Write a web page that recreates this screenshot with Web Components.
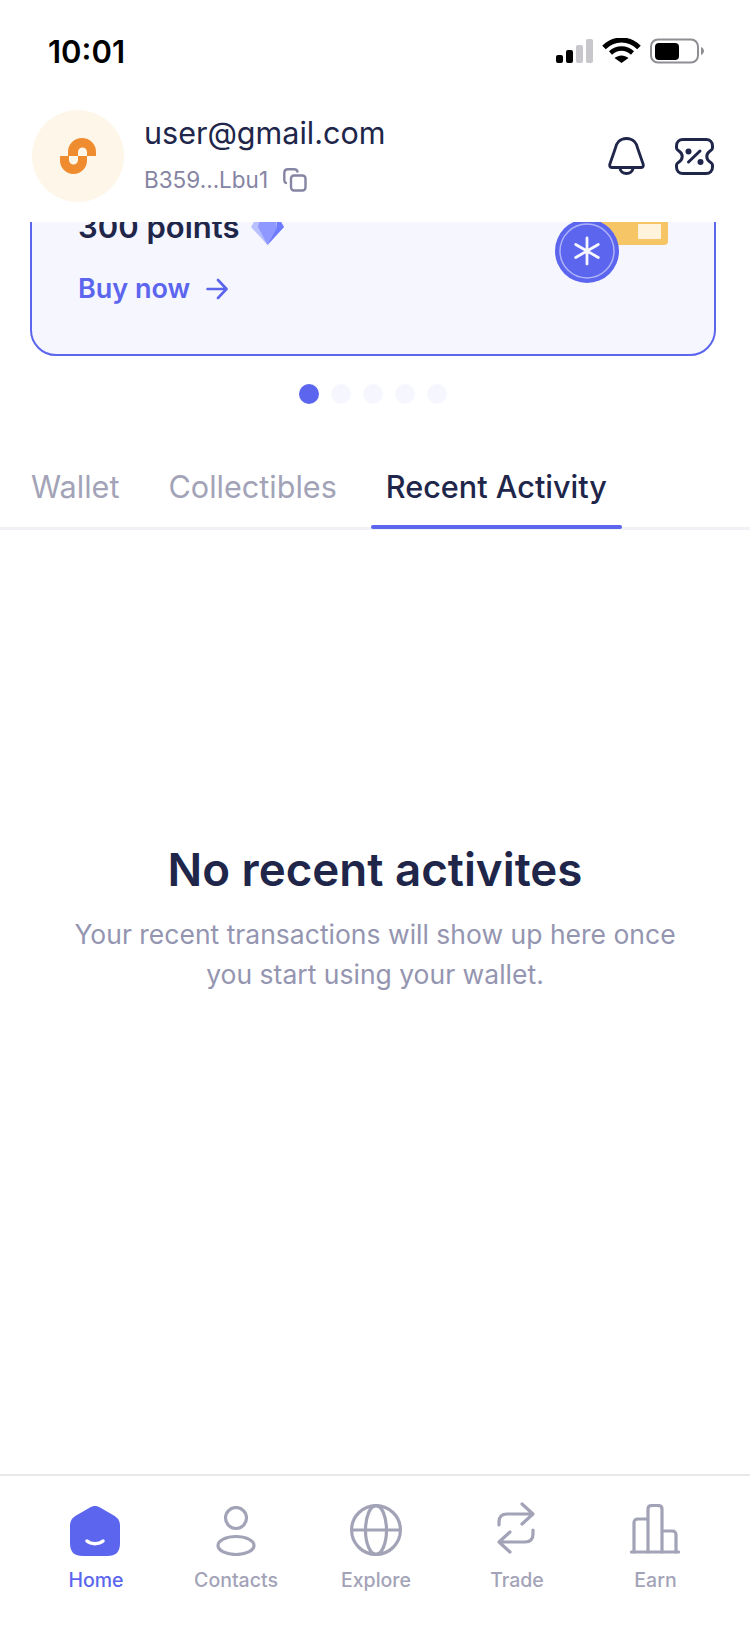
<!DOCTYPE html>
<html lang="en">
<head>
<meta charset="utf-8">
<title>Wallet</title>
<style>
  html, body { margin: 0; padding: 0; background: #fff; }
  body { font-family: Inter, "Liberation Sans", sans-serif; }
</style>
</head>
<body>
<app-shell>
  <status-bar></status-bar>
  <wallet-header></wallet-header>
  <promo-carousel></promo-carousel>
  <tab-strip></tab-strip>
  <empty-state></empty-state>
  <bottom-nav></bottom-nav>
</app-shell>
<script>
class AppShell extends HTMLElement {
  constructor() { super(); this.attachShadow({ mode: 'open' }); }
  connectedCallback() {
    this.shadowRoot.innerHTML = `
    <style>
      :host { display: flex; flex-direction: column; width: 750px; height: 1628px; overflow: hidden; background: #fff; }
    </style>
    <slot></slot>`;
  }
}

class StatusBar extends HTMLElement {
  constructor() { super(); this.attachShadow({ mode: 'open' }); }
  connectedCallback() {
    this.shadowRoot.innerHTML = `
    <style>
      :host { display: flex; justify-content: space-between; align-items: flex-start; height: 90px; flex: none; padding: 34px 46px 0 48px; box-sizing: border-box; }
      .time { font: 600 31px/36px Inter, sans-serif; color: #000; }
      svg { display: block; margin-top: 4px; }
    </style>
    <span class="time">10:01</span>
    <svg width="148" height="26" viewBox="0 0 148 26">
      <rect x="0" y="17" width="7" height="8" rx="2" fill="#000"/>
      <rect x="10" y="12" width="7" height="13" rx="2" fill="#000"/>
      <rect x="20" y="7" width="7" height="18" rx="2" fill="#c7c7cc"/>
      <rect x="30" y="1" width="7" height="24" rx="2" fill="#c7c7cc"/>
      <path d="M48 8.5 C58 -1.5 73 -1.5 83 8.5" transform="translate(0 1)" fill="none" stroke="#000" stroke-width="5"/>
      <path d="M54.5 15 C61 9 70 9 76.5 15" fill="none" stroke="#000" stroke-width="4.5"/>
      <path d="M58.5 20 C63 16.500 68 16.500 72.500 20 L65.500 25 Z" fill="#000"/>
      <rect x="95" y="1.500" width="47" height="23" rx="7" fill="none" stroke="#8e8e93" stroke-width="2"/>
      <rect x="99" y="5" width="24" height="17" rx="4" fill="#000"/>
      <path d="M145 9 C147 10 148 11.500 148 13 C148 14.500 147 16 145 17 Z" fill="#8e8e93"/>
    </svg>`;
  }
}

class WalletHeader extends HTMLElement {
  constructor() { super(); this.attachShadow({ mode: 'open' }); }
  connectedCallback() {
    this.shadowRoot.innerHTML = `
    <style>
      :host { display: flex; align-items: center; height: 132px; flex: none; padding: 0 36px 0 32px; box-sizing: border-box; background: #fff; }
      .avatar { width: 92px; height: 92px; border-radius: 50%; background: #fdf6e9; display: flex; align-items: center; justify-content: center; flex: none; }
      .who { margin-left: 20px; flex: 1; display: flex; flex-direction: column; gap: 12px; margin-top: -5px; }
      .mail { font: 400 30.5px/40px Inter, sans-serif; color: #20264a; }
      .addr { display: flex; align-items: center; gap: 15px; font: 400 22.5px/30px Inter, sans-serif; color: #8584a3; }
      .icons { display: flex; align-items: center; gap: 30px; }
      svg { display: block; }
    </style>
    <div class="avatar">
      <svg width="36" height="36" viewBox="0 0 36 36">
        <path d="M8 18 V14 A14 14 0 0 1 36 14 V18 H27 V14 A4.500 4.500 0 0 0 18 14 V18 Z" fill="#f08c30"/>
        <path d="M0 18 H9 V22 A4.500 4.500 0 0 0 18 22 V18 H27 V22.500 A13.500 13.500 0 0 1 0 22.500 Z" fill="#f08c30"/>
      </svg>
    </div>
    <div class="who">
      <div class="mail">user@gmail.com</div>
      <div class="addr">B359...Lbu1
        <svg width="24" height="24" viewBox="0 0 24 24" fill="none" stroke="#8584a3" stroke-width="2.400" stroke-linecap="round">
          <rect x="8" y="7.500" width="14.500" height="15" rx="3"/>
          <path d="M3 15 C1.800 14.500 1.300 13.500 1.300 12 V5 C1.300 2.800 2.800 1.300 5 1.300 H11 C13 1.300 14 2 14.500 3.500"/>
        </svg>
      </div>
    </div>
    <div class="icons">
      <svg width="37" height="38" viewBox="0 0 39 38" preserveAspectRatio="none" fill="none" stroke="#20264a" stroke-width="3" stroke-linejoin="round" stroke-linecap="round">
        <path d="M19.500 1.500 C12.500 1.500 8.500 6.500 7.500 12 L2 27 C1.300 29.500 2.500 30.500 4.500 30.500 H34.500 C36.500 30.500 37.700 29.500 37 27 L31.500 12 C30.500 6.500 26.500 1.500 19.500 1.500 Z"/>
        <path d="M12.500 31 C13 34.500 16 36.500 19.500 36.500 C23 36.500 26 34.500 26.500 31"/>
      </svg>
      <svg width="39" height="37" viewBox="0 0 39 37" fill="none" stroke="#20264a" stroke-width="3" stroke-linecap="round">
        <path d="M8 1.500 H31 C35 1.500 37.500 4 37.500 8 V10 C37.500 11.500 36.500 12 35 13 C32.800 14.500 31.800 16.500 31.800 18.500 C31.800 20.500 32.800 22.500 35 24 C36.500 25 37.500 25.500 37.500 27 V29 C37.500 33 35 35.500 31 35.500 H8 C4 35.500 1.500 33 1.500 29 V27 C1.500 25.500 2.500 25 4 24 C6.200 22.500 7.200 20.500 7.200 18.500 C7.200 16.500 6.200 14.500 4 13 C2.500 12 1.500 11.500 1.500 10 V8 C1.500 4 4 1.500 8 1.500 Z"/>
        <path d="M25 13 L13.500 24"/>
        <circle cx="13.500" cy="13.500" r="3" fill="#20264a" stroke="none"/>
        <circle cx="25.500" cy="24" r="3" fill="#20264a" stroke="none"/>
      </svg>
    </div>`;
  }
}

class PromoCarousel extends HTMLElement {
  constructor() { super(); this.attachShadow({ mode: 'open' }); }
  connectedCallback() {
    this.shadowRoot.innerHTML = `
    <style>
      :host { display: block; flex: none; }
      .clip { height: 134px; overflow: hidden; display: flex; flex-direction: column; justify-content: flex-end; padding: 0 34px 0 30px; }
      .card { position: relative; flex: none; box-sizing: border-box; height: 200px; padding: 49px 0 0 46px; background: #f6f6fe; border: 2px solid #5b65ee; border-radius: 26px; }
      .title { display: flex; align-items: center; gap: 12px; font: 600 31px/40px Inter, sans-serif; color: #20264a; }
      .title svg { margin-top: 6px; }
      .buy { display: flex; align-items: center; gap: 16px; margin-top: 24px; font: 600 27px/36px Inter, sans-serif; color: #5b65ee; }
      .art { position: absolute; right: 46px; top: 57px; }
      .dots { display: flex; gap: 12px; justify-content: center; margin: 28px 4px 0 0; }
      .dots i { width: 20px; height: 20px; border-radius: 50%; background: #f6f6fe; }
      .dots i.on { background: #5b65ee; }
      svg { display: block; }
    </style>
    <div class="clip">
      <div class="card">
        <div class="title">300 points
          <svg width="33" height="30" viewBox="0 0 33 30">
            <path d="M7 0 H26 L33 12 L16.500 30 L0 12 Z" fill="#b9c0ff"/>
            <path d="M10 0 H23 L26 12 L16.500 30 L7 12 Z" fill="#8e98ff"/>
            <path d="M26 0 L33 12 L16.500 30 L26 12 Z" fill="#6f7bff"/>
          </svg>
        </div>
        <div class="buy">Buy now
          <svg width="22" height="22" viewBox="0 0 22 22" fill="none" stroke="#5b65ee" stroke-width="2.600" stroke-linecap="round" stroke-linejoin="round">
            <path d="M1.500 11 H20 M12 2 L20.500 11 L12 20"/>
          </svg>
        </div>
        <svg class="art" width="113" height="68" viewBox="0 0 113 68">
          <path d="M20 0 H113 V26 Q113 30 109 30 H20 Z" fill="#f5c566"/>
          <rect x="83" y="9" width="23" height="15" rx="1" fill="#fff3dc"/>
          <circle cx="32" cy="36" r="32" fill="#5b65ee"/>
          <circle cx="32" cy="36" r="27" fill="none" stroke="#aeb2f8" stroke-width="1.500"/>
          <path d="M32 23 V49 M20.700 29.500 L43.300 42.500 M43.300 29.500 L20.700 42.500" stroke="#f6f6fe" stroke-width="2.800" stroke-linecap="round"/>
        </svg>
      </div>
    </div>
    <div class="dots"><i class="on"></i><i></i><i></i><i></i><i></i></div>`;
  }
}

class TabStrip extends HTMLElement {
  constructor() { super(); this.attachShadow({ mode: 'open' }); }
  connectedCallback() {
    this.shadowRoot.innerHTML = `
    <style>
      :host { display: flex; flex: none; margin-top: 50px; padding-left: 16px; height: 73px; border-bottom: 3px solid #f1f1f6; font-family: Inter, sans-serif; }
      .tab { padding: 13px 15px 0; font-size: 30.6px; line-height: 40px; color: #a3a3b8; margin-right: 19px; }
      .tab.on { position: relative; color: #20264a; font-weight: 500; }
      .tab.on::after { content: ""; position: absolute; left: 0; right: 0; bottom: -2px; height: 4px; background: #5b65ee; border-radius: 2px; }
    </style>
    <div class="tab">Wallet</div>
    <div class="tab">Collectibles</div>
    <div class="tab on">Recent Activity</div>`;
  }
}

class EmptyState extends HTMLElement {
  constructor() { super(); this.attachShadow({ mode: 'open' }); }
  connectedCallback() {
    this.shadowRoot.innerHTML = `
    <style>
      :host { display: block; flex: 1; padding-top: 310px; text-align: center; font-family: Inter, sans-serif; }
      h2 { margin: 0; font-size: 45.7px; line-height: 60px; font-weight: 600; color: #20264a; }
      p { margin: 14px 0 0; font-size: 26.5px; line-height: 40px; color: #9495b0; }
    </style>
    <h2>No recent activites</h2>
    <p>Your recent transactions will show up here once<br>you start using your wallet.</p>`;
  }
}

class BottomNav extends HTMLElement {
  constructor() { super(); this.attachShadow({ mode: 'open' }); }
  connectedCallback() {
    const items = [
      ['Home', `<svg style="margin-right:2px" width="50" height="50" viewBox="0 0 50 50"><path d="M25 0 C23 0 22 .5 20 1.500 L7 9 C2 12 0 14.500 0 20 V37 C0 46 4 50 13 50 H37 C46 50 50 46 50 37 V20 C50 14.500 48 12 43 9 L30 1.500 C28 .5 27 0 25 0 Z" fill="#5b65ee"/><path d="M17 35 C21 38.500 29 38.500 33 35" fill="none" stroke="#fff" stroke-width="3.500" stroke-linecap="round"/></svg>`],
      ['Contacts', `<svg width="40" height="50" viewBox="0 0 40 50" fill="none" stroke="#a3a3b8" stroke-width="3.200"><circle cx="20" cy="12" r="10.500"/><ellipse cx="20" cy="39.500" rx="18" ry="9"/></svg>`],
      ['Explore', `<svg width="52" height="52" viewBox="0 0 52 52" fill="none" stroke="#a3a3b8" stroke-width="3.200"><circle cx="26" cy="26" r="24.400"/><ellipse cx="26" cy="26" rx="10.500" ry="24.400"/><path d="M1.600 26 H50.400"/></svg>`],
      ['Trade', `<svg style="margin:0 3px 2px 0" width="38" height="52" viewBox="0 0 38 52" fill="none" stroke="#a3a3b8" stroke-width="3.200" stroke-linecap="round" stroke-linejoin="round"><path d="M2 23 V20 C2 14 5 12 10 12 H35 M25 2 L36 12 L25 22"/><path d="M36 28 V32 C36 38 33 40 28 40 H3 M13 30 L2 40 L13 50"/></svg>`],
      ['Earn', `<svg style="margin:0 2px 2px 0" width="50" height="50" viewBox="0 0 50 50" fill="none" stroke="#a3a3b8" stroke-width="3.200" stroke-linecap="round" stroke-linejoin="round"><path d="M1.500 48 H48.500"/><path d="M4 48 V19 C4 16 5 15 8 15 H18 M18 48 V5 C18 2.500 19.500 1.500 22 1.500 H28 C30.500 1.500 32 2.500 32 5 V48 M32 27 H42 C45 27 46 28 46 31 V48"/></svg>`]
    ];
    this.shadowRoot.innerHTML = `
    <style>
      :host { display: grid; grid-template-columns: 140px 140px 140px 142px 135px; flex: none; box-sizing: border-box; height: 154px; padding: 27px 0 0 26px; border-top: 2px solid #e8e8e8; font-family: Inter, sans-serif; }
      .item { display: flex; flex-direction: column; align-items: center; }
      .ico { height: 53px; display: flex; align-items: flex-end; }
      .lbl { margin-top: 11px; font-size: 19.5px; line-height: 26px; font-weight: 500; color: #a3a3b8; }
      .on .lbl { color: #5b65ee; }
      svg { display: block; }
    </style>
    ${items.map((it, i) => `<div class="item ${i === 0 ? 'on' : ''}"><div class="ico">${it[1]}</div><div class="lbl">${it[0]}</div></div>`).join('')}`;
  }
}

customElements.define('app-shell', AppShell);
customElements.define('status-bar', StatusBar);
customElements.define('wallet-header', WalletHeader);
customElements.define('promo-carousel', PromoCarousel);
customElements.define('tab-strip', TabStrip);
customElements.define('empty-state', EmptyState);
customElements.define('bottom-nav', BottomNav);
</script>
</body>
</html>
